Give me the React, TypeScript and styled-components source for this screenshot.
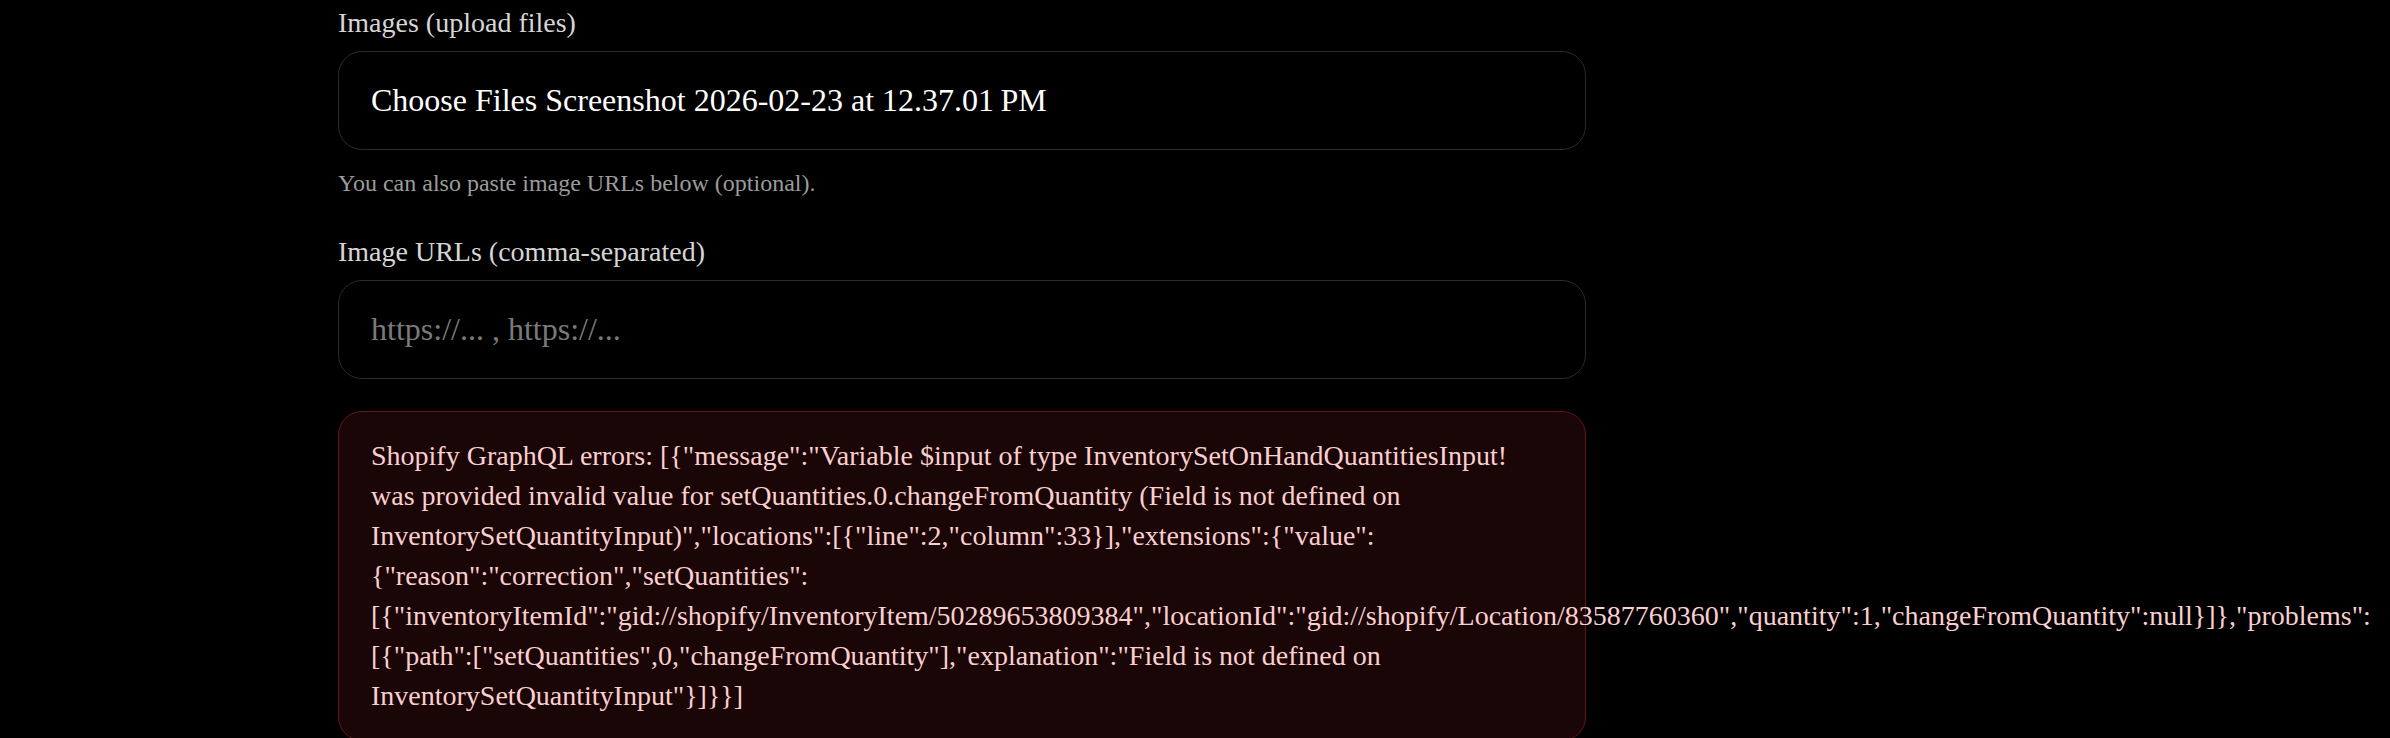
import React from "react";
import styled, { createGlobalStyle } from "styled-components";

const GlobalStyle = createGlobalStyle`
  html, body {
    margin: 0;
    padding: 0;
    background: #000;
  }
  body {
    font-family: "Liberation Serif", "Times New Roman", serif;
    color: #fff;
  }
`;

const Page = styled.main`
  display: flex;
  flex-direction: column;
  width: 1248px;
  padding: 7px 0 0 338px;
`;

const Field = styled.div<{ $gap?: number }>`
  display: flex;
  flex-direction: column;
  margin-top: ${(p) => p.$gap ?? 0}px;
`;

const Label = styled.label`
  font-size: 28px;
  color: #d6d6d6;
  margin-bottom: 12px;
`;

const FileBox = styled.div`
  border: 1px solid #2b2b2b;
  border-radius: 24px;
  padding: 30px 32px;
  font-size: 32px;
  color: #ffffff;
  background: #000;
`;

const TextInput = styled.input`
  box-sizing: border-box;
  width: 100%;
  border: 1px solid #2b2b2b;
  border-radius: 24px;
  padding: 30px 32px;
  font-family: "Liberation Serif", "Times New Roman", serif;
  font-size: 32px;
  line-height: normal;
  color: #ffffff;
  background: #000;
  outline: none;
  &::placeholder {
    color: #7a7a7a;
  }
`;

const Help = styled.p`
  margin: 20px 0 0;
  font-size: 24px;
  color: #9b9b9b;
`;

const ErrorBox = styled.div`
  margin-top: 32px;
  border: 1px solid #5e1818;
  border-radius: 24px;
  background: #1a0606;
  padding: 24px 32px;
  font-size: 28px;
  line-height: 40px;
  color: #fbcfcf;
`;

const errorText =
  'Shopify GraphQL errors: [{"message":"Variable $input of type InventorySetOnHandQuantitiesInput! was provided invalid value for setQuantities.0.changeFromQuantity (Field is not defined on InventorySetQuantityInput)","locations":[{"line":2,"column":33}],"extensions":{"value":{"reason":"correction","setQuantities":[{"inventoryItemId":"gid://shopify/InventoryItem/50289653809384","locationId":"gid://shopify/Location/83587760360","quantity":1,"changeFromQuantity":null}]},"problems":[{"path":["setQuantities",0,"changeFromQuantity"],"explanation":"Field is not defined on InventorySetQuantityInput"}]}}]';

export default function App() {
  return (
    <>
      <GlobalStyle />
      <Page>
        <Field>
          <Label>Images (upload files)</Label>
          <FileBox>Choose Files Screenshot 2026-02-23 at 12.37.01{"\u202F"}PM</FileBox>
        </Field>
        <Help>You can also paste image URLs below (optional).</Help>
        <Field $gap={39}>
          <Label htmlFor="urls">Image URLs (comma-separated)</Label>
          <TextInput id="urls" placeholder="https://... , https://..." />
        </Field>
        <ErrorBox>{errorText}</ErrorBox>
      </Page>
    </>
  );
}
